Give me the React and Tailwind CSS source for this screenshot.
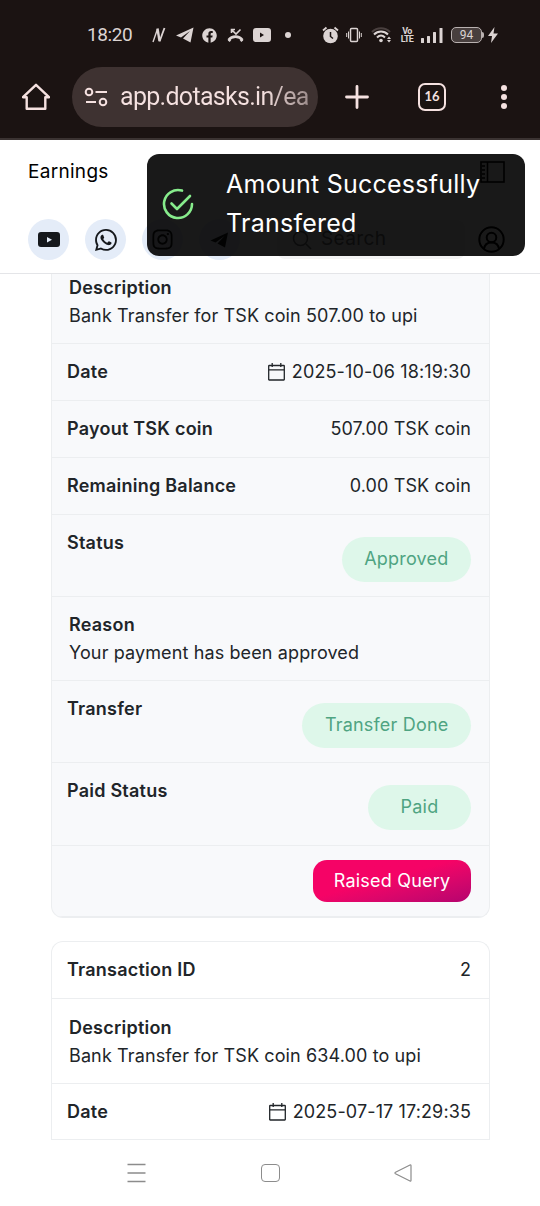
import React from 'react';
import { FaFacebook, FaTelegramPlane, FaInstagram } from 'react-icons/fa';
import { BsWhatsapp } from 'react-icons/bs';

const transactions = [
  {
    description: 'Bank Transfer for TSK coin 507.00 to upi',
    date: '2025-10-06 18:19:30',
    payout: '507.00 TSK coin',
    balance: '0.00 TSK coin',
    reason: 'Your payment has been approved',
  },
  {
    id: 2,
    description: 'Bank Transfer for TSK coin 634.00 to upi',
    date: '2025-07-17 17:29:35',
  },
];

const StatusBar = () => (
  <div className="flex h-[67px] items-start pt-[23px] text-[#dcd4d3]">
    <div className="flex h-6 items-center pl-[87px]">
      <span className="w-[65px] font-[Roboto] text-[19px] leading-6 tracking-[-0.4px]">18:20</span>
      <svg className="h-4 w-[14px]" viewBox="0 0 14 16" fill="none" stroke="currentColor">
        <path d="M1 15L5.5 2" strokeWidth="1.4" />
        <path d="M5.5 1.5L7.5 14" strokeWidth="2.4" />
        <path d="M7.5 14.5L12.5 1" strokeWidth="1.8" />
      </svg>
      {/* Telegram */}
      <svg className="ml-[10px] h-[16px] w-[18px]" viewBox="0 0 18 16" fill="currentColor">
        <path d="M17.500.500L0 8.500l5 2L14 4 7 11.500l7.500 4z" />
      </svg>
      <FaFacebook className="ml-[8px] h-[15px] w-[15px]" />
      <svg className="ml-[10px] h-4 w-[17px]" viewBox="0 0 17 16" fill="none" stroke="currentColor">
        <path d="M1.5 13C5 8.5 12 8.5 15.5 13" strokeWidth="2.6" />
        <path d="M1.5 12.5l2 1.5M15.5 12.5l-2 1.5" strokeWidth="2.5" />
        <path d="M4.5 6V2.5H8M5 3l4 4 4.5-4.5" strokeWidth="1.6" />
      </svg>
      <svg className="ml-[9px] h-[14px] w-[18px]" viewBox="0 0 18 14">
        <path d="M3 0h12a3 3 0 0 1 3 3v8a3 3 0 0 1-3 3H3a3 3 0 0 1-3-3V3a3 3 0 0 1 3-3zM7 4.500v5l4-2.500z" fill="currentColor" fillRule="evenodd" />
      </svg>
      <span className="ml-[14px] h-[6px] w-[6px] rounded-full bg-current" />
    </div>
    <div className="ml-[31px] flex h-6 items-center">
      {/* Alarm */}
      <svg className="h-[18px] w-[17px]" viewBox="0 0 17 18" fill="none" stroke="currentColor">
        <circle cx="8.5" cy="10" r="7.3" fill="currentColor" stroke="none" />
        <path d="M1 4.5L4.5 1.5M16 4.5L12.5 1.5" strokeWidth="1.8" />
        <path d="M8.5 6v4.5l2.500 2" stroke="#1b1312" strokeWidth="1.5" />
      </svg>
      {/* Vibrate */}
      <svg className="ml-[7px] h-4 w-[16px]" viewBox="0 0 16 16" fill="none" stroke="currentColor" strokeWidth="1.5">
        <rect x="4.5" y="1.5" width="7" height="13" rx="1" />
        <path d="M2.500 4.500v7M.700 6v4M13.500 4.500v7M15.300 6v4" strokeWidth="1" />
      </svg>
      {/* Wifi */}
      <svg className="ml-[9px] h-[18px] w-[21px]" viewBox="0 0 21 18" fill="none" stroke="currentColor" strokeWidth="2">
        <path d="M1 6C6 1 14 1 19 6" stroke="#4a403f" />
        <path d="M3 8.500C7 4.500 13 4.500 17 8.500M6 11.500C8.500 9 11.500 9 14 11.500" />
        <circle cx="10" cy="14.500" r="1.800" fill="currentColor" stroke="none" />
        <path d="M18 10.500l2 2.500h-4zM18 16.500l2-2.500h-4z" fill="currentColor" stroke="none" />
      </svg>
      <span className="ml-[9px] flex w-[12px] flex-col items-center font-[Roboto] text-[9px] leading-[8px] font-bold tracking-[-0.7px]">
        <span>Vo</span>
        <span>LTE</span>
      </span>
      <svg className="ml-[8px] h-4 w-[23px]" viewBox="0 0 23 16" fill="currentColor">
        <rect x="0" y="11" width="3" height="5" rx=".5" />
        <rect x="6" y="9" width="3" height="7" rx=".5" />
        <rect x="12" y="5" width="3" height="11" rx=".5" />
        <rect x="18.5" y="1" width="3" height="15" rx=".5" />
      </svg>
      <span className="ml-[7px] flex h-4 w-[31px] items-center justify-center rounded-[5px] border-[1.5px] border-[#b9b1b0] bg-[#483f3e] font-[Roboto] text-[12px] leading-3">
        94
      </span>
      <span className="h-[6px] w-[2px] rounded-r bg-[#b9b1b0]" />
      <svg className="ml-[4px] h-4 w-[10px]" viewBox="0 0 10 16" fill="currentColor">
        <path d="M6.500 0L0 9h4l-1 7 7-9.500H5.500z" />
      </svg>
    </div>
  </div>
);

const BrowserBar = () => (
  <div className="flex h-[60px] items-center text-[#f5e1e0]">
    <svg className="ml-[22px] h-[28px] w-[28px]" viewBox="0 0 28 28" fill="none" stroke="currentColor" strokeWidth="2.4">
      <path d="M1 14.200h3.700V25.800h18.600V14.200H27L14 1.800z" strokeLinejoin="round" />
    </svg>
    <div className="ml-[22px] flex h-[60px] w-[246px] items-center rounded-full bg-[#3e3231] pl-[12px]">
      <svg className="h-5 w-6 shrink-0" viewBox="0 0 24 20" fill="none" stroke="currentColor" strokeWidth="2">
        <circle cx="5" cy="5" r="3.300" />
        <path d="M11.500 5H23M2 15h10" />
        <circle cx="19" cy="15" r="3.300" />
      </svg>
      <span className="ml-[12px] w-[190px] bg-linear-to-r from-[#f5e1e0] from-75% to-[#9b8b8a] bg-clip-text font-[Roboto] text-[25px] leading-8 tracking-[-0.7px] whitespace-nowrap text-transparent">
        app.dotasks.in/ea
      </span>
    </div>
    <svg className="ml-[27px] h-6 w-6" viewBox="0 0 24 24" fill="none" stroke="currentColor" strokeWidth="2.8" strokeLinecap="round">
      <path d="M12 1.500v21M1.500 12h21" />
    </svg>
    <span className="ml-[49px] flex h-[28px] w-[28px] items-center justify-center rounded-[7px] border-[2.5px] border-current font-[Lato] text-[13px] font-bold">
      16
    </span>
    <div className="ml-[55px] flex flex-col gap-[3px]">
      <span className="h-[6px] w-[6px] rounded-full bg-current" />
      <span className="h-[6px] w-[6px] rounded-full bg-current" />
      <span className="h-[6px] w-[6px] rounded-full bg-current" />
    </div>
  </div>
);

const SocialButton = ({ children }) => (
  <span className="flex h-[41px] w-[41px] items-center justify-center rounded-full bg-[#e4ecf8] text-[#15181c]">
    {children}
  </span>
);

const PageHeader = () => (
  <header className="h-[134px] border-b border-[#e4e5e8] bg-white px-[28px] text-black">
    <div className="flex h-[64px] items-center justify-between">
      <h1 className="text-[19px] tracking-[0.3px]">Earnings</h1>
      <svg className="mr-[7px] h-[22px] w-[25px]" viewBox="0 0 25 22" fill="none" stroke="currentColor" strokeWidth="1.6">
        <rect x="1" y="1" width="23" height="20" />
        <path d="M7.500 1v20" />
        <path d="M2 5h3M2 9h3M2 13h3M2 17h3" />
      </svg>
    </div>
    <div className="mt-[15px] flex items-center">
      <div className="flex gap-[16px]">
        <SocialButton>
          <svg className="h-[15px] w-[22px]" viewBox="0 0 22 15">
            <path d="M3 0h16a3 3 0 0 1 3 3v9a3 3 0 0 1-3 3H3a3 3 0 0 1-3-3V3a3 3 0 0 1 3-3zM9 5v5.500l5-2.700z" fill="currentColor" fillRule="evenodd" />
          </svg>
        </SocialButton>
        <SocialButton><BsWhatsapp className="h-[22px] w-[22px]" /></SocialButton>
        <SocialButton><FaInstagram className="h-[23px] w-[23px]" /></SocialButton>
        <SocialButton>
          <svg className="h-[16px] w-[19px]" viewBox="0 0 18 16" fill="currentColor">
            <path d="M17.500.500L0 8.500l5 2L14 4 7 11.500l7.500 4z" />
          </svg>
        </SocialButton>
      </div>
      <div className="ml-[37px] flex h-[39px] w-[188px] items-center rounded-lg bg-[#f3f3f4] pl-[15px] text-[#6f7276]">
        <svg className="h-5 w-5" viewBox="0 0 20 20" fill="none" stroke="currentColor" strokeWidth="1.6">
          <circle cx="8.5" cy="8.5" r="7" />
          <path d="M14 14l5 5" />
        </svg>
        <span className="ml-[9px] text-[19px] tracking-[0.4px]">Search</span>
      </div>
      <svg className="ml-[13px] h-[27px] w-[27px]" viewBox="0 0 27 27" fill="none" stroke="currentColor" strokeWidth="2">
        <circle cx="13.5" cy="13.5" r="12.2" />
        <circle cx="13.5" cy="11.5" r="4.8" />
        <path d="M6 23c.500-4 3.500-6.500 7.500-6.500s7 2.500 7.500 6.500" />
      </svg>
    </div>
  </header>
);

const Toast = ({ message }) => (
  <div className="absolute top-[154px] left-[147px] z-50 flex h-[102px] w-[378px] items-center rounded-[12px] bg-black/90 pb-[2px] pl-[15px]">
    <svg className="h-[32px] w-[32px] shrink-0" viewBox="0 0 32 32" fill="none" stroke="#87ec8c" strokeWidth="2.6" strokeLinecap="round" strokeLinejoin="round">
      <path d="M20 2.600A14 14 0 1 0 30 16" />
      <path d="M9.500 15.500l5.500 5.500L28 8" />
    </svg>
    <p className="ml-[32px] w-[270px] text-[25px] leading-[39px] tracking-[0.25px] text-white">{message}</p>
  </div>
);

const CalendarIcon = () => (
  <svg className="mr-[7px] h-[18px] w-[17px]" viewBox="0 0 17 18" fill="none" stroke="currentColor" strokeWidth="1.3">
    <rect x=".7" y="2.5" width="15.6" height="14.5" rx=".5" />
    <path d="M.700 6.800h15.600M4.200 0v4M12.800 0v4" />
  </svg>
);

const Row = ({ label, className = 'h-[57px]', children }) => (
  <div className={`flex items-start justify-between border-b border-[#eceef0] pt-[14px] pr-[18px] pl-[15px] leading-[28px] ${className}`}>
    <span className="font-semibold tracking-[0.23px]">{label}</span>
    {children}
  </div>
);

const Block = ({ label, text, className = 'h-[85px]' }) => (
  <div className={`flex flex-col justify-end border-b border-[#eceef0] pb-[13px] pl-[17px] leading-[28px] ${className}`}>
    <span className="font-semibold tracking-[0.23px]">{label}</span>
    <span>{text}</span>
  </div>
);

const Badge = ({ children }) => (
  <span className="mt-[8px] flex h-[44.5px] min-w-[103px] items-center justify-center rounded-full bg-[#def7ea] px-[22.5px] tracking-[0.2px] text-[#4fa482]">
    {children}
  </span>
);

const DateValue = ({ value }) => (
  <span className="flex items-center">
    <CalendarIcon />
    {value}
  </span>
);

const NavigationBar = () => (
  <nav className="flex h-[67px] items-center bg-white pb-[2px] text-[#8c8c8c]">
    <svg className="ml-[127px] h-5 w-[19px]" viewBox="0 0 19 20" stroke="currentColor" strokeWidth="1.3">
      <path d="M.500 1.500h18M.500 10h18M.500 18.500h18" />
    </svg>
    <span className="ml-[115px] h-[18px] w-[19px] rounded-[4px] border border-current" />
    <svg className="ml-[114px] h-[18px] w-[18px]" viewBox="0 0 18 18" fill="none" stroke="currentColor" strokeWidth="1.2" strokeLinejoin="round">
      <path d="M16 1L1.500 8.200c-.700.400-.700 1.200 0 1.600L16 17c.700.300 1 0 1-.700V1.700c0-.700-.300-1-1-.700z" />
    </svg>
  </nav>
);

export default function App() {
  const [current, next] = transactions;

  return (
    <div className="relative h-[1206px] w-[540px] overflow-hidden bg-white font-[Inter]">
      <div className="h-[140px] border-b-2 border-[#3b3332] bg-[#1b1312]">
        <StatusBar />
        <BrowserBar />
      </div>
      <PageHeader />

      <main className="h-[866px] overflow-hidden px-[51px] text-[18px] tracking-[0.12px] text-[#212529]">
        <section className="w-[439px] overflow-hidden rounded-b-[12px] border-x border-b border-[#eceef0] bg-[#f8f9fb]">
          <Block label="Description" text={current.description} className="h-[70px]" />
          <Row label="Date"><DateValue value={current.date} /></Row>
          <Row label="Payout TSK coin"><span>{current.payout}</span></Row>
          <Row label="Remaining Balance"><span>{current.balance}</span></Row>
          <Row label="Status" className="h-[82px]"><Badge>Approved</Badge></Row>
          <Block label="Reason" text={current.reason} className="h-[84px]" />
          <Row label="Transfer" className="h-[82px]"><Badge>Transfer Done</Badge></Row>
          <Row label="Paid Status" className="h-[83px]"><Badge>Paid</Badge></Row>
          <div className="flex h-[71px] justify-end border-b border-[#eceef0] pt-[14px] pr-[18px]">
            <button className="h-[42px] w-[158px] rounded-[14px] bg-linear-165 from-[#f50366] from-45% to-[#b5036e] pb-px tracking-[0.2px] text-white">
              Raised Query
            </button>
          </div>
        </section>

        <section className="mt-[23px] w-[439px] rounded-t-[12px] border-x border-t border-[#eceef0]">
          <Row label="Transaction ID"><span>{next.id}</span></Row>
          <Block label="Description" text={next.description} />
          <Row label="Date" className="h-[56px]"><DateValue value={next.date} /></Row>
        </section>
      </main>

      <NavigationBar />
      <Toast message="Amount Successfully Transfered" />
    </div>
  );
}
